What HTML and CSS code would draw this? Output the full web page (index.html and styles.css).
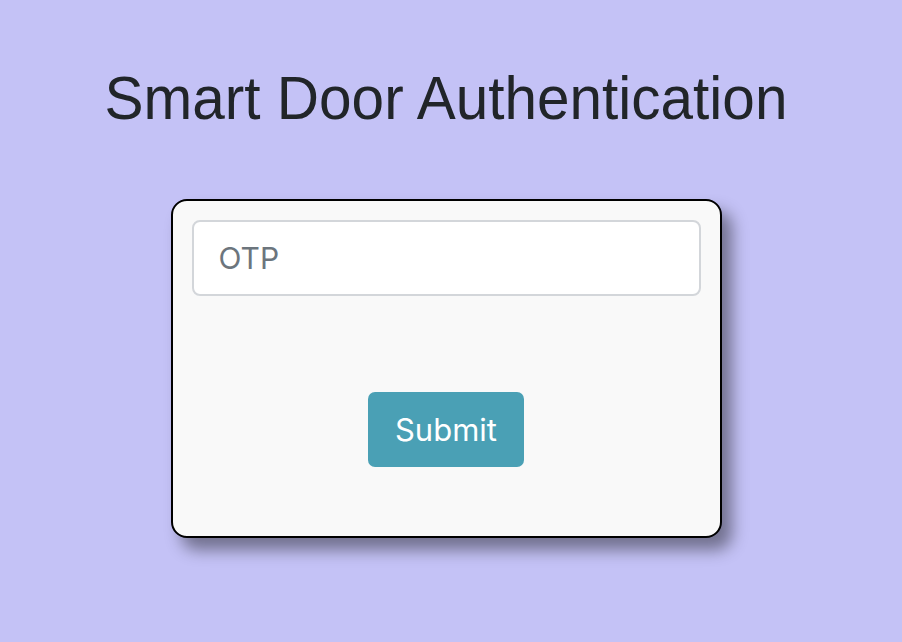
FILE: index.html
```html
<!DOCTYPE html>
<html>
<head>
<meta charset="utf-8">
<link rel="stylesheet" href="styles.css">
</head>
<body>
<main class="page">
  <h1 class="title">Smart Door Authentication</h1>
  <form class="card">
    <input class="otp" type="text" placeholder="OTP">
    <div class="actions">
      <button class="submit" type="button">Submit</button>
    </div>
  </form>
</main>
</body>
</html>
```
FILE: styles.css
```css
html, body {
  margin: 0;
  padding: 0;
  background: #c4c2f6;
  height: 100%;
}
.page {
  width: 892px;
  display: flex;
  flex-direction: column;
  align-items: center;
}
.title {
  margin: 58px 0 0 0;
  font-family: "Liberation Sans", Arial, sans-serif;
  font-weight: 400;
  font-size: 58.5px;
  line-height: 80px;
  color: #212529;
  transform: scaleY(1.04);
}
.card {
  margin-top: 61px;
  box-sizing: border-box;
  width: 551px;
  height: 339px;
  border: 2px solid #000;
  border-radius: 16px;
  background: #f9f9f9;
  box-shadow: 10px 12px 16px rgba(0, 0, 0, 0.42);
  padding: 19px;
  display: flex;
  flex-direction: column;
}
.otp {
  box-sizing: border-box;
  width: 100%;
  height: 76px;
  border: 2px solid #d3d6da;
  border-radius: 8px;
  background: #fff;
  padding: 0 25px;
  font-family: Inter, "Noto Sans", sans-serif;
  font-size: 30px;
  color: #212529;
  outline: none;
}
.otp::placeholder {
  color: #6c757d;
}
.actions {
  display: flex;
  justify-content: center;
  margin-top: 96px;
}
.submit {
  width: 156px;
  height: 75px;
  border: none;
  border-radius: 7px;
  background: #4aa0b5;
  color: #fff;
  font-family: Inter, "Noto Sans", sans-serif;
  font-size: 31px;
  cursor: pointer;
}
```
